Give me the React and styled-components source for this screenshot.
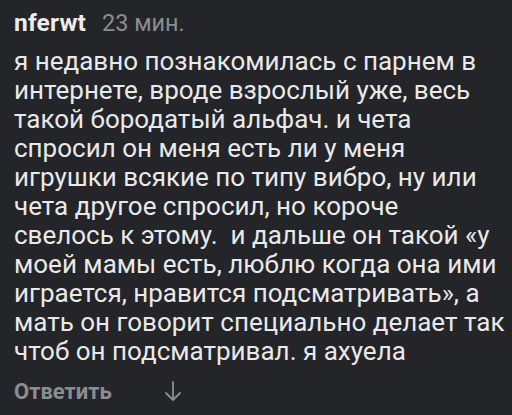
import React from "react";
import styled, { createGlobalStyle } from "styled-components";

const Global = createGlobalStyle`
  html, body { margin: 0; padding: 0; background: #232529; }
  body { font-family: Roboto, "Noto Sans", sans-serif; }
`;

const Comment = styled.div`
  width: 512px;
  height: 415px;
  box-sizing: border-box;
  background: #232529;
  padding: 6px 0 0 14px;
  display: flex;
  flex-direction: column;
  overflow: hidden;
`;

const Header = styled.div`
  display: flex;
  align-items: baseline;
  gap: 16px;
  height: 34px;
  line-height: 34px;
`;

const Author = styled.span`
  font-size: 24.5px;
  font-weight: 700;
  letter-spacing: 0.2px;
  color: #ececec;
`;

const Time = styled.span`
  font-size: 23.4px;
  color: #8b8d92;
`;

const Body = styled.div`
  margin: 7px 0 0 0;
  font-size: 26px;
  line-height: 29px;
  color: #e9e9e9;
  display: flex;
  flex-direction: column;
`;

const Line = styled.span`
  white-space: pre;
`;

const Actions = styled.div`
  display: flex;
  align-items: center;
  gap: 52px;
  margin-top: 8px;
  height: 34px;
`;

const Reply = styled.span`
  font-size: 22px;
  font-weight: 700;
  color: #8b8d92;
`;

const Arrow = styled.svg`
  width: 18px;
  height: 22px;
  color: #8b8d92;
`;

const lines = [
  "я недавно познакомилась с парнем в",
  "интернете, вроде взрослый уже, весь",
  "такой бородатый альфач. и чета",
  "спросил он меня есть ли у меня",
  "игрушки всякие по типу вибро, ну или",
  "чета другое спросил, но короче",
  "свелось к этому.  и дальше он такой «у",
  "моей мамы есть, люблю когда она ими",
  "играется, нравится подсматривать», а",
  "мать он говорит специально делает так",
  "чтоб он подсматривал. я ахуела",
];

export default function App() {
  return (
    <>
      <Global />
      <Comment>
        <Header>
          <Author>nferwt</Author>
          <Time>23 мин.</Time>
        </Header>
        <Body>
          {lines.map((l, i) => (
            <Line key={i}>{l}</Line>
          ))}
        </Body>
        <Actions>
          <Reply>Ответить</Reply>
          <Arrow viewBox="0 0 18 22" fill="none" stroke="currentColor" strokeWidth="1.8" strokeLinecap="round" strokeLinejoin="round">
            <path d="M9 2 V20 M2 13 L9 20 L16 13" />
          </Arrow>
        </Actions>
      </Comment>
    </>
  );
}
